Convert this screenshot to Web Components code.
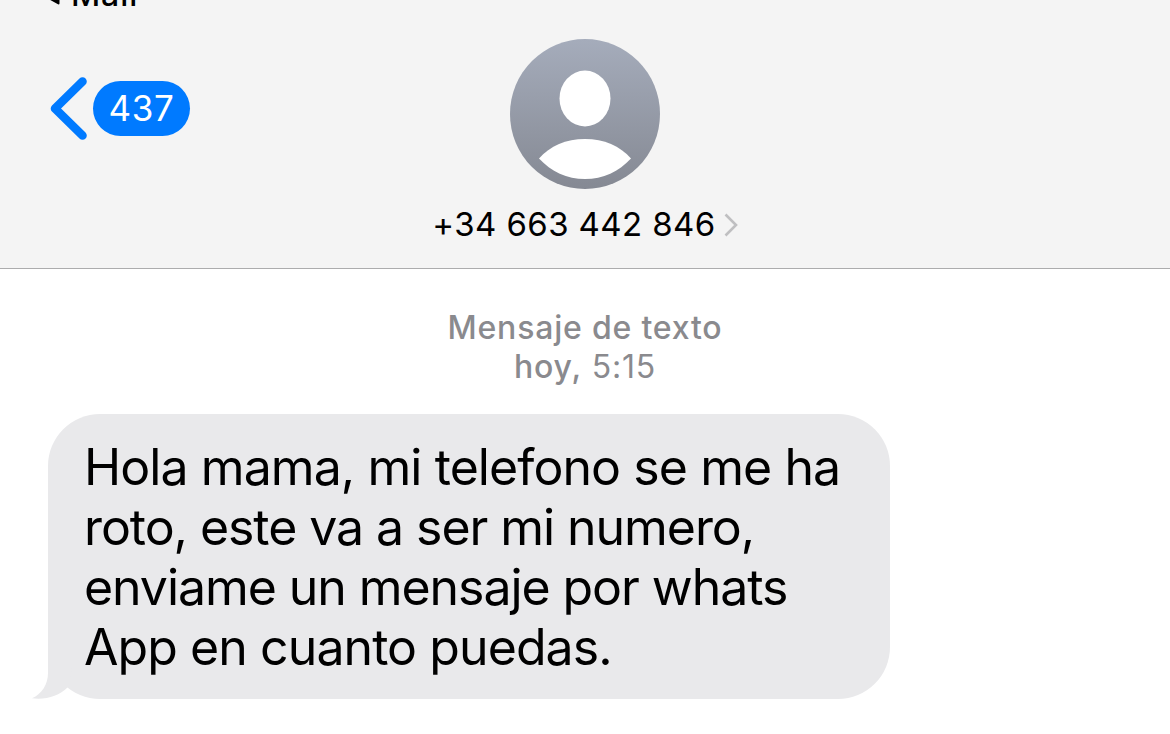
<!DOCTYPE html>
<html lang="es">
<head>
<meta charset="utf-8">
<title>Mensajes</title>
<style>
  body {
    margin: 0;
    height: 734px;
    overflow: hidden;
    background: #fff;
    color: #000;
    font-family: Inter, "Liberation Sans", sans-serif;
  }
</style>
</head>
<body>
<chat-screen></chat-screen>

<script>
class AppReturn extends HTMLElement {
  constructor() {
    super();
    this.attachShadow({ mode: "open" });
  }

  static get styles() {
    return /* css */`
      :host {
        display: flex;
        align-items: flex-end;
        height: 14px;
        padding-left: 46px;
        overflow: hidden;
        font-size: 32px;
        font-weight: 500;
        line-height: 38px;
        letter-spacing: 0.9px;
      }

      svg {
        flex: none;
        width: 14px;
        height: 26px;
        margin: 0 11px 5px 0;
      }
    `;
  }

  connectedCallback() {
    this.shadowRoot.innerHTML = /* html */`
    <style>${AppReturn.styles}</style>
    <svg viewBox="0 0 14 26"><path d="M1 14 L12.5 6 V20.5 Z" stroke="#000" stroke-width="2" stroke-linejoin="round"/></svg>
    <slot></slot>`;
  }
}

class BackButton extends HTMLElement {
  constructor() {
    super();
    this.attachShadow({ mode: "open" });
  }

  static get styles() {
    return /* css */`
      :host {
        display: flex;
        align-items: center;
        gap: 5px;
        height: 63px;
      }

      svg {
        width: 38px;
        height: 63px;
      }

      .badge {
        width: 97px;
        height: 55px;
        border-radius: 28px;
        background: #007aff;
        color: #fff;
        font-size: 35px;
        line-height: 55px;
        letter-spacing: 0.7px;
        text-align: center;
      }
    `;
  }

  connectedCallback() {
    this.shadowRoot.innerHTML = /* html */`
    <style>${BackButton.styles}</style>
    <svg viewBox="0 0 38 63" fill="none" stroke="#007aff" stroke-width="8.6" stroke-linecap="round" stroke-linejoin="round"><path d="M32.5 4.5 L5 31.5 L32.5 58.5"/></svg>
    <div class="badge"><slot></slot></div>`;
  }
}

class ContactCard extends HTMLElement {
  constructor() {
    super();
    this.attachShadow({ mode: "open" });
  }

  static get styles() {
    return /* css */`
      :host {
        display: flex;
        flex-direction: column;
        align-items: center;
      }

      .avatar {
        width: 150px;
        height: 150px;
      }

      .name {
        display: flex;
        align-items: center;
        gap: 8px;
        margin-top: 15px;
        font-size: 33px;
        line-height: 40px;
        letter-spacing: 0.4px;
        white-space: nowrap;
      }

      .chevron {
        width: 14px;
        height: 24px;
        margin-top: 1px;
      }
    `;
  }

  connectedCallback() {
    this.shadowRoot.innerHTML = /* html */`
    <style>${ContactCard.styles}</style>
    <svg class="avatar" viewBox="0 0 150 150">
      <defs>
        <linearGradient id="shade" x1="0" y1="0" x2="0" y2="1">
          <stop offset="0" stop-color="#a5acbb"/>
          <stop offset="1" stop-color="#858993"/>
        </linearGradient>
      </defs>
      <circle cx="75" cy="75" r="75" fill="url(#shade)"/>
      <ellipse cx="75" cy="59.5" rx="25.5" ry="28" fill="#fff"/>
      <path d="M29 119.5 C40 107 56 100 75 100 C94 100 110 107 121 119.5 C109 132.5 93 140 75 140 C57 140 41 132.5 29 119.5 Z" fill="#fff"/>
    </svg>
    <div class="name">
      <span><slot></slot></span>
      <svg class="chevron" viewBox="0 0 14 24" fill="none" stroke="#bfbfc1" stroke-width="2.6"><path d="M1.5 1.5 L12 12 L1.5 22.5"/></svg>
    </div>`;
  }
}

class ChatHeader extends HTMLElement {
  constructor() {
    super();
    this.attachShadow({ mode: "open" });
  }

  static get styles() {
    return /* css */`
      :host {
        display: block;
        box-sizing: border-box;
        height: 269px;
        border-bottom: 1px solid #acacad;
        background: #f4f4f4;
      }

      nav {
        display: grid;
        grid-template-columns: 1fr auto 1fr;
        align-items: start;
        padding: 25px 0 0 0;
      }

      .back {
        padding: 38px 0 0 50px;
      }
    `;
  }

  connectedCallback() {
    this.shadowRoot.innerHTML = /* html */`
    <style>${ChatHeader.styles}</style>
    <app-return>Mail</app-return>
    <nav>
      <div class="back"><back-button>437</back-button></div>
      <contact-card>+34 663 442 846</contact-card>
    </nav>`;
  }
}

class MessageStamp extends HTMLElement {
  constructor() {
    super();
    this.attachShadow({ mode: "open" });
  }

  static get styles() {
    return /* css */`
      :host {
        display: block;
        padding-top: 39px;
        color: #8a8a8e;
        font-size: 32px;
        line-height: 39px;
        letter-spacing: 0.8px;
        text-align: center;
      }

      .kind, .day {
        font-weight: 500;
      }
    `;
  }

  connectedCallback() {
    this.shadowRoot.innerHTML = /* html */`
    <style>${MessageStamp.styles}</style>
    <div class="kind"><slot name="kind"></slot></div>
    <div><span class="day"><slot name="day"></slot></span> <slot name="time"></slot></div>`;
  }
}

class MessageBubble extends HTMLElement {
  constructor() {
    super();
    this.attachShadow({ mode: "open" });
  }

  static get styles() {
    return /* css */`
      :host {
        display: block;
        position: relative;
        box-sizing: border-box;
        width: 842px;
        height: 285px;
        margin: 28px 0 0 48px;
        padding: 23px 0 0 36px;
        border-radius: 52px;
        background: #e9e9eb;
        font-size: 50px;
        line-height: 60px;
        letter-spacing: -0.92px;
        white-space: nowrap;
      }

      /* the middle lines are set a little tighter */
      ::slotted(.tight) {
        letter-spacing: -1.06px;
      }

      .tail {
        position: absolute;
        left: -16px;
        bottom: 0;
        width: 52px;
        height: 60px;
      }
    `;
  }

  connectedCallback() {
    this.shadowRoot.innerHTML = /* html */`
    <style>${MessageBubble.styles}</style>
    <svg class="tail" viewBox="0 0 52 60"><path d="M16 5 V34 C16 45 10 55 0 59.3 C14 61 27 57 35.5 48.5 L40 30 Z" fill="#e9e9eb"/></svg>
    <slot></slot>`;
  }
}

class ChatScreen extends HTMLElement {
  constructor() {
    super();
    this.attachShadow({ mode: "open" });
  }

  static get styles() {
    return /* css */`
      :host {
        display: block;
      }
    `;
  }

  connectedCallback() {
    this.shadowRoot.innerHTML = /* html */`
    <style>${ChatScreen.styles}</style>
    <chat-header></chat-header>
    <message-stamp>
      <span slot="kind">Mensaje de texto</span>
      <span slot="day">hoy,</span>
      <span slot="time">5:15</span>
    </message-stamp>
    <message-bubble>
      <div>Hola mama, mi telefono se me ha</div>
      <div class="tight">roto, este va a ser mi numero,</div>
      <div class="tight">enviame un mensaje por whats</div>
      <div>App en cuanto puedas.</div>
    </message-bubble>`;
  }
}

customElements.define("app-return", AppReturn);
customElements.define("back-button", BackButton);
customElements.define("contact-card", ContactCard);
customElements.define("chat-header", ChatHeader);
customElements.define("message-stamp", MessageStamp);
customElements.define("message-bubble", MessageBubble);
customElements.define("chat-screen", ChatScreen);
</script>
</body>
</html>
